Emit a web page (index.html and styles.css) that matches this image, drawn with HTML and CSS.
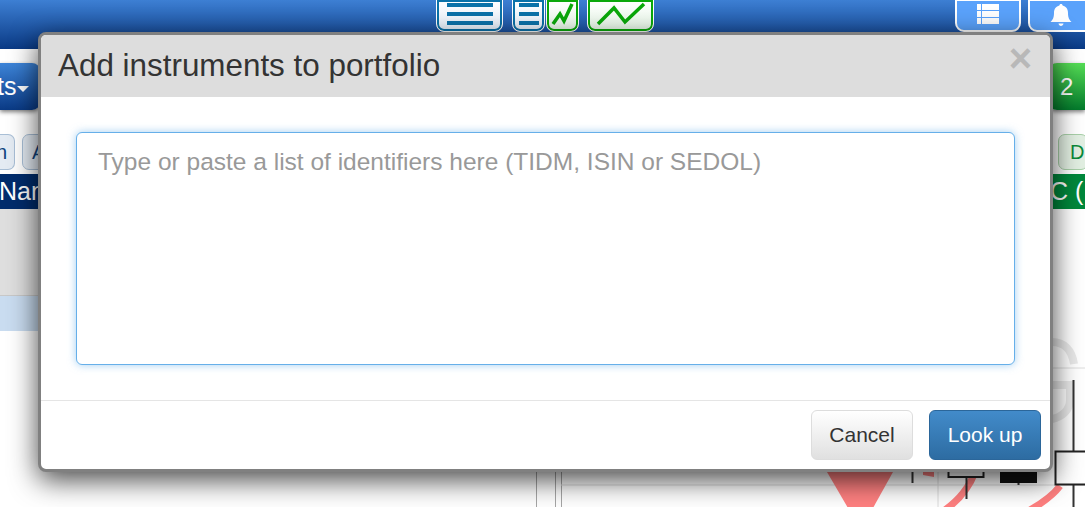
FILE: index.html
```html
<!DOCTYPE html>
<html lang="en">
<head>
<meta charset="utf-8">
<title>Add instruments to portfolio</title>
<link rel="stylesheet" href="styles.css">
</head>
<body>
<div class="page">
  <header class="topbar">
    <div class="view-btn view-blue wide">
      <svg width="46" height="26" viewBox="0 0 46 26"><path class="bars-blue" d="M0 4h46M0 13h46M0 22h46"/></svg>
    </div>
    <div class="view-btn view-blue narrow">
      <svg width="20" height="26" viewBox="0 0 20 26"><path class="bars-blue" d="M0 4h20M0 13h20M0 22h20"/></svg>
    </div>
    <div class="view-btn view-green narrow">
      <svg width="24" height="26" viewBox="0 0 24 26"><path class="line-green" d="M2 23L9 13l4 7L21 3"/></svg>
    </div>
    <div class="view-btn view-green wide">
      <svg width="50" height="26" viewBox="0 0 50 26"><path class="line-green" d="M2 23L18 7l11 14L48 3"/></svg>
    </div>
    <div class="spacer"></div>
    <div class="tool-btn">
      <svg width="22" height="22" viewBox="0 0 22 22"><path fill="#fff" d="M0 1h4v6H0zM5 1h17v6H5zM0 8h4v6H0zM5 8h17v6H5zM0 15h4v6H0zM5 15h17v6H5z"/></svg>
    </div>
    <div class="tool-btn tool-last">
      <svg width="22" height="24" viewBox="0 0 22 24"><path fill="#fff" d="M11 1c1 0 1.600.7 1.600 1.600C16 3.400 18 6 18 10c0 5 1.500 7 3.500 9H.5C2.500 17 4 15 4 10c0-4 2-6.600 5.400-7.400C9.400 1.700 10 1 11 1zM8.500 20.500h5C13.300 22 12.200 23 11 23s-2.300-1-2.500-2.500z"/></svg>
    </div>
  </header>

  <div class="navrow">
    <div class="nav-btn">ts<span class="caret"></span></div>
    <div class="badge-btn">2</div>
  </div>

  <div class="tabrow">
    <div class="chip chip-first">n</div>
    <div class="chip chip-a">A</div>
    <div class="spacer"></div>
    <div class="chip chip-green">D</div>
  </div>

  <div class="headrow">
    <div class="head-navy">Name</div>
    <div class="head-green">C (</div>
  </div>

  <div class="content">
    <div class="left-col">
      <div class="left-gray"></div>
      <div class="left-blue"></div>
    </div>
    <svg class="chart" width="551" height="299" viewBox="534 208 551 299">
      <path class="mark" d="M1052 341c12 0 20 8 22 22M1052 384h18v15c0 10-8 17-18 19"/>
      <path class="ln-mid" d="M536.500 208V507M555.500 208V507M561.500 208V507"/>
      <path class="ln-grid" d="M561 484H1085M561 367H1085M938 208V507"/>
      <path class="pink" d="M827 471H893L873 507H848Z"/>
      <path class="pink-arc" d="M945 509c14-10 24-22 30-38M1030 509c14-8 24-16 30-24"/>
      <path class="pink" d="M923 471h11v5l-11-2z"/>
      <path class="wick" d="M912.500 465v17M966.500 476v22M1018.500 465v19M1073.500 379v128"/>
      <rect class="candle-w" x="948.500" y="440" width="35" height="36"/>
      <rect class="candle-b" x="1000" y="440" width="37" height="42"/>
      <rect class="candle-w" x="1055.500" y="450.500" width="40" height="33"/>
    </svg>
  </div>
</div>

<div class="modal">
  <div class="modal-head">
    <h1 class="modal-title">Add instruments to portfolio</h1>
    <span class="close">×</span>
  </div>
  <div class="modal-body">
    <textarea class="ids" placeholder="Type or paste a list of identifiers here (TIDM, ISIN or SEDOL)"></textarea>
  </div>
  <div class="modal-foot">
    <button class="btn btn-cancel" type="button">Cancel</button>
    <button class="btn btn-primary" type="button">Look up</button>
  </div>
</div>
</body>
</html>
```
FILE: styles.css
```css
* { box-sizing: border-box; }
html, body { margin: 0; height: 507px; overflow: hidden; background: #fff; }
body { position: relative; font-family: "Liberation Sans", Arial, sans-serif; color: #333; }
.page { width: 1085px; height: 507px; display: flex; flex-direction: column; overflow: hidden; }
.spacer { flex: 1; }

.topbar { height: 49px; flex: none; display: flex; align-items: flex-start; padding-left: 436px; background: linear-gradient(#3d7fd3, #0a3a85); }
.view-btn { height: 33px; margin-top: -1px; border: 1px solid #fff; border-radius: 0 0 8px 8px; display: flex; justify-content: center; overflow: hidden; }
.view-btn svg { margin-top: 1px; }
.view-blue { background: linear-gradient(#fff, #e6f0fb); box-shadow: inset 0 0 0 2px #0b72a9; }
.view-green { background: linear-gradient(#fff, #e8f9e8); box-shadow: inset 0 0 0 2px #0aa80a; }
.wide { width: 67px; }
.narrow { width: 33px; }
.view-blue.wide { margin-right: 9px; }
.view-blue.narrow { margin-right: 1px; }
.view-green.narrow { margin-right: 8px; }
.bars-blue { stroke: #0b72a9; stroke-width: 4; fill: none; }
.line-green { stroke: #0aa80a; stroke-width: 3.500; fill: none; }
.tool-btn { width: 66px; height: 33px; margin-top: -1px; margin-right: 7px; background: #5aa2fb; border: 2px solid #fff; border-radius: 0 0 9px 9px; display: flex; justify-content: center; padding-top: 2px; }
.tool-last { margin-right: -9px; }

.navrow { height: 48px; margin-top: 14px; flex: none; display: flex; justify-content: space-between; }
.nav-btn { width: 40px; height: 47px; border-radius: 0 8px 8px 0; background: linear-gradient(#3d84d8, #0a3a85); color: #fff; font-size: 25px; line-height: 47px; text-indent: -3px; box-shadow: 0 2px 4px rgba(0,0,0,.5); white-space: nowrap; }
.caret { display: inline-block; width: 0; height: 0; margin-left: 1px; vertical-align: 3px; border-left: 6.500px solid transparent; border-right: 6.500px solid transparent; border-top: 6px solid #fff; }
.badge-btn { width: 36px; height: 47px; padding-left: 11px; border-radius: 8px 0 0 8px; background: linear-gradient(#55dd55, #037a2c); color: #fff; font-size: 24px; line-height: 47px; box-shadow: 0 2px 4px rgba(0,0,0,.5); }

.tabrow { height: 36px; margin-top: 23px; flex: none; display: flex; }
.chip { height: 36px; border: 1px solid #a9bfd6; border-radius: 7px; background: #e4ebf3; font-size: 20px; line-height: 34px; color: #11457f; white-space: nowrap; overflow: hidden; }
.chip-first { width: 15px; margin-right: 7px; border-left: 0; border-radius: 0 7px 7px 0; text-indent: -4px; }
.chip-a { width: 40px; padding-left: 9px; }
.chip-green { width: 30px; padding-left: 11px; margin-right: -3px; border-color: #a8d0a8; background: #e2efe2; color: #0a8a3a; }

.headrow { height: 35px; margin-top: 4px; flex: none; display: flex; justify-content: space-between; color: #fff; font-size: 25px; line-height: 35px; }
.head-navy { width: 300px; background: #002c6c; text-indent: -1px; }
.head-green { width: 300px; background: #00883c; padding-left: 265px; white-space: nowrap; overflow: hidden; }

.content { flex: 1; display: flex; justify-content: space-between; min-height: 0; }
.left-col { width: 300px; display: flex; flex-direction: column; }
.left-gray { height: 87px; background: #dedede; border-bottom: 1px solid #c8c8c8; }
.left-blue { height: 35px; background: #c9dcf0; }
.chart { flex: none; display: block; }
.ln-mid { stroke: #a6a6a6; stroke-width: 1; fill: none; }
.ln-grid { stroke: #dcdcdc; stroke-width: 1; fill: none; }
.mark { stroke: #e9e9e9; stroke-width: 8; fill: none; }
.pink { fill: #ff8080; }
.pink-arc { stroke: #ff8080; stroke-width: 7; fill: none; }
.wick { stroke: #333; stroke-width: 2; fill: none; }
.candle-w { fill: #fff; stroke: #222; stroke-width: 2; }
.candle-b { fill: #111; }

.modal { position: absolute; left: 38px; top: 32px; width: 1015px; height: 440px; display: flex; flex-direction: column; background: #fff; border: 3px solid #808080; border-radius: 8px; overflow: hidden; box-shadow: 0 8px 28px rgba(0,0,0,.72); }
.modal-head { height: 62px; flex: none; display: flex; align-items: center; justify-content: space-between; padding: 0 18px 0 17px; background: #dddddd; }
.modal-title { margin: 0; font-size: 31.400px; font-weight: 400; color: #333; }
.close { font-size: 40px; font-weight: 700; line-height: 1; color: #b8b8b8; margin-top: -16px; }
.modal-body { flex: 1; padding: 35px; min-height: 0; display: flex; }
.ids { display: block; width: 100%; height: 100%; resize: none; padding: 14px 21px; border: 1px solid #66afe9; border-radius: 6px; outline: 0; font: 24.500px/1.25 "Liberation Sans", Arial, sans-serif; box-shadow: 0 0 8px rgba(102,175,233,.6); }
.ids::placeholder { color: #999; opacity: 1; }
.modal-foot { height: 69px; flex: none; display: flex; justify-content: flex-end; gap: 16px; padding: 9px 9px 0 0; border-top: 1px solid #e5e5e5; }
.btn { height: 50px; border-radius: 6px; font: 21px "Liberation Sans", Arial, sans-serif; padding: 0; }
.btn-cancel { width: 102px; color: #333; border: 1px solid #ddd; background: linear-gradient(#fff, #e0e0e0); }
.btn-primary { width: 112px; color: #fff; border: 1px solid #2b669a; background: linear-gradient(#428bca, #2d6ca2); }
```
